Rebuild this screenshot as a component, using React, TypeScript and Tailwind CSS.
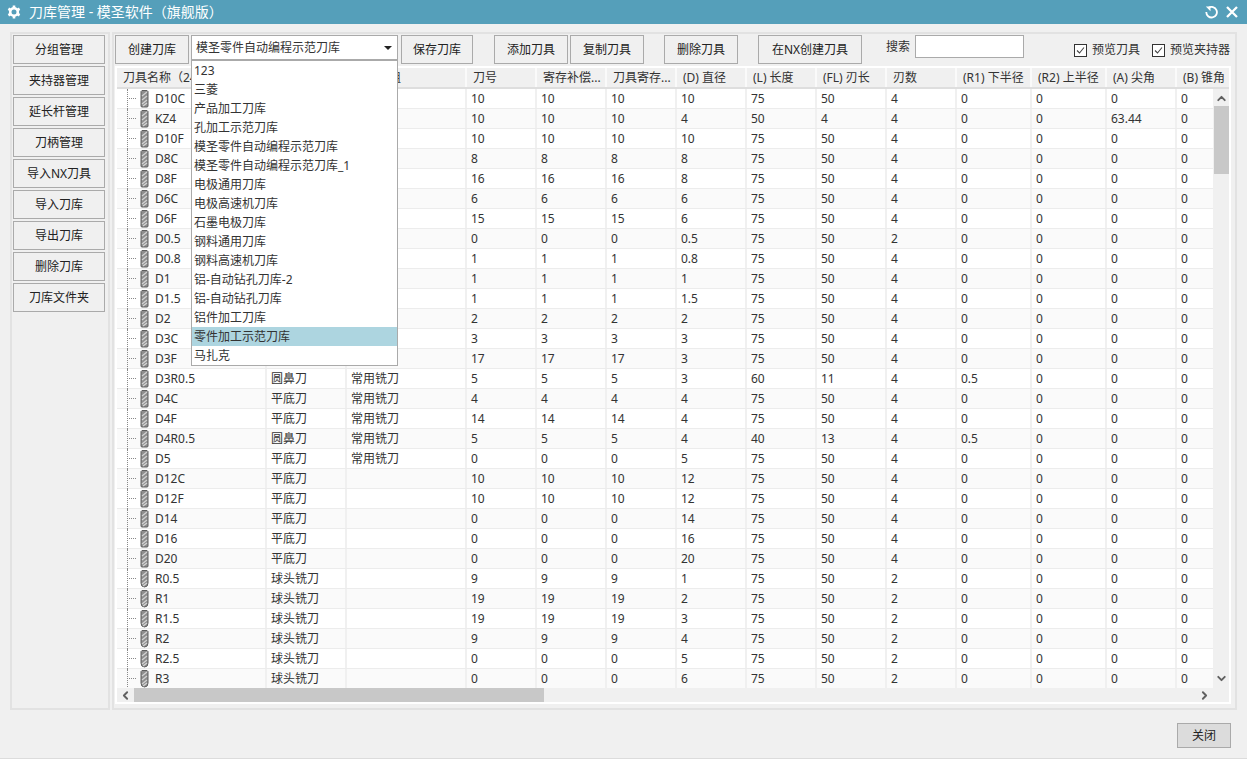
import { ChevronDown, ChevronLeft, ChevronRight, ChevronUp } from "lucide-react";

const SIDE_BUTTONS = ["分组管理", "夹持器管理", "延长杆管理", "刀柄管理", "导入NX刀具", "导入刀库", "导出刀库", "删除刀库", "刀库文件夹"];

const LIBRARIES = [
  "123",
  "三菱",
  "产品加工刀库",
  "孔加工示范刀库",
  "模圣零件自动编程示范刀库",
  "模圣零件自动编程示范刀库_1",
  "电极通用刀库",
  "电极高速机刀库",
  "石墨电极刀库",
  "钢料通用刀库",
  "钢料高速机刀库",
  "铝-自动钻孔刀库-2",
  "铝-自动钻孔刀库",
  "铝件加工刀库",
  "零件加工示范刀库",
  "马扎克",
];

const COLUMNS = [
  { title: "刀具名称（24）", width: "w-[150px]" },
  { title: "类型", width: "w-[80px]" },
  { title: "刀具分组", width: "w-[120px]" },
  { title: "刀号", width: "w-[70px]" },
  { title: "寄存补偿...", width: "w-[70px]" },
  { title: "刀具寄存...", width: "w-[70px]" },
  { title: "(D) 直径", width: "w-[70px]" },
  { title: "(L) 长度", width: "w-[70px]" },
  { title: "(FL) 刃长", width: "w-[70px]" },
  { title: "刃数", width: "w-[70px]" },
  { title: "(R1) 下半径", width: "w-[75px]" },
  { title: "(R2) 上半径", width: "w-[75px]" },
  { title: "(A) 尖角", width: "w-[70px]" },
  { title: "(B) 锥角", width: "w-[70px]" },
];

const FLAT = "平底刀";
const NOSE = "圆鼻刀";
const BALL = "球头铣刀";
const MILL = "常用铣刀";

// name, type, group, tool no, D, L, FL, flutes, R1, A
// type and group of the first rows sit behind the open list, so they stay empty
const TOOLS: [string, string, string, string, string, string, string, string, string, string][] = [
  ["D10C", "", "", "10", "10", "75", "50", "4", "0", "0"],
  ["KZ4", "", "", "10", "4", "50", "4", "4", "0", "63.44"],
  ["D10F", "", "", "10", "10", "75", "50", "4", "0", "0"],
  ["D8C", "", "", "8", "8", "75", "50", "4", "0", "0"],
  ["D8F", "", "", "16", "8", "75", "50", "4", "0", "0"],
  ["D6C", "", "", "6", "6", "75", "50", "4", "0", "0"],
  ["D6F", "", "", "15", "6", "75", "50", "4", "0", "0"],
  ["D0.5", "", "", "0", "0.5", "75", "50", "2", "0", "0"],
  ["D0.8", "", "", "1", "0.8", "75", "50", "4", "0", "0"],
  ["D1", "", "", "1", "1", "75", "50", "4", "0", "0"],
  ["D1.5", "", "", "1", "1.5", "75", "50", "4", "0", "0"],
  ["D2", "", "", "2", "2", "75", "50", "4", "0", "0"],
  ["D3C", "", "", "3", "3", "75", "50", "4", "0", "0"],
  ["D3F", "", "", "17", "3", "75", "50", "4", "0", "0"],
  ["D3R0.5", NOSE, MILL, "5", "3", "60", "11", "4", "0.5", "0"],
  ["D4C", FLAT, MILL, "4", "4", "75", "50", "4", "0", "0"],
  ["D4F", FLAT, MILL, "14", "4", "75", "50", "4", "0", "0"],
  ["D4R0.5", NOSE, MILL, "5", "4", "40", "13", "4", "0.5", "0"],
  ["D5", FLAT, MILL, "0", "5", "75", "50", "4", "0", "0"],
  ["D12C", FLAT, "", "10", "12", "75", "50", "4", "0", "0"],
  ["D12F", FLAT, "", "10", "12", "75", "50", "4", "0", "0"],
  ["D14", FLAT, "", "0", "14", "75", "50", "4", "0", "0"],
  ["D16", FLAT, "", "0", "16", "75", "50", "4", "0", "0"],
  ["D20", FLAT, "", "0", "20", "75", "50", "4", "0", "0"],
  ["R0.5", BALL, "", "9", "1", "75", "50", "2", "0", "0"],
  ["R1", BALL, "", "19", "2", "75", "50", "2", "0", "0"],
  ["R1.5", BALL, "", "19", "3", "75", "50", "2", "0", "0"],
  ["R2", BALL, "", "9", "4", "75", "50", "2", "0", "0"],
  ["R2.5", BALL, "", "0", "5", "75", "50", "2", "0", "0"],
  ["R3", BALL, "", "0", "6", "75", "50", "2", "0", "0"],
];

function GearIcon() {
  return (
    <svg width="14" height="14" viewBox="0 0 14 14" className="shrink-0">
      <circle cx="7" cy="7" r="3.800" fill="none" stroke="white" strokeWidth="2.600" />
      <path
        d="M7 .5v2.500M7 11v2.500M1.400 3.750l2.200 1.250M10.400 9l2.200 1.250M1.400 10.250l2.200-1.250M10.400 5l2.200-1.250"
        stroke="white"
        strokeWidth="2.600"
      />
    </svg>
  );
}

function ReloadIcon() {
  return (
    <svg width="13" height="13" viewBox="0 0 13 13" className="shrink-0">
      <path d="M3.500 1.900A5.300 5.300 0 1 1 1.300 6" fill="none" stroke="white" strokeWidth="1.800" />
      <path d="M.8 .5h4.700v4.700z" fill="white" />
    </svg>
  );
}

function CutterIcon({ ball }: { ball: boolean }) {
  return (
    <svg width="9" height="18" viewBox="0 0 9 18" className="shrink-0">
      <path
        d={ball ? "M2 .5h5l1 1v11.500q0 4-3.500 4T1 13V1.500z" : "M2 .5h5l1 1v15l-1 .5H2l-1-.5v-15z"}
        fill="#8e8e8e"
        stroke="#5e5e5e"
        strokeWidth="1"
      />
      <path d="M2 6l5-4M2 10l5-4M2 14l5-4M3 16l4-3" stroke="#d4d4d4" strokeWidth="1.200" fill="none" />
    </svg>
  );
}

function ToolButton({ label, width }: { label: string; width: string }) {
  return (
    <button className={`${width} h-[29px] shrink-0 border border-[#aaa] bg-[#f0f0f0] text-[#222]`}>{label}</button>
  );
}

function Check({ label }: { label: string }) {
  return (
    <div className="flex items-center gap-[5px]">
      <div className="flex h-[13px] w-[13px] items-center justify-center border border-[#333] bg-white">
        <svg width="11" height="11" viewBox="0 0 11 11">
          <path d="M2 5.500l2.500 2.500L9 2.500" stroke="#444" strokeWidth="1.100" fill="none" />
        </svg>
      </div>
      <span>{label}</span>
    </div>
  );
}

function Cell({ width, children }: { width: string; children?: React.ReactNode }) {
  return (
    <div className={`${width} flex h-full shrink-0 items-center border-r-2 border-[#f0f0f0] pl-1 whitespace-nowrap`}>
      {children}
    </div>
  );
}

function ToolRow({ tool, index }: { tool: (typeof TOOLS)[number]; index: number }) {
  const [name, type, group, no, d, l, fl, flutes, r1, a] = tool;
  const values = [no, no, no, d, l, fl, flutes, r1, "0", a, "0"];
  return (
    <div className={`flex h-5 border-b border-[#ececec] ${index % 2 ? "bg-[#fafafa]" : "bg-white"}`}>
      <div className="flex h-full w-[150px] shrink-0 items-center border-r-2 border-[#f0f0f0]">
        <div className="relative ml-[10px] h-full w-[13px] shrink-0">
          <div className="h-[22px] w-0 border-l border-dotted border-[#888]" />
          <div className="absolute top-[9px] left-0 w-[9px] border-t border-dotted border-[#888]" />
        </div>
        <CutterIcon ball={type === BALL} />
        <span className="ml-[6px]">{name}</span>
      </div>
      <Cell width="w-[80px]">{type}</Cell>
      <Cell width="w-[120px]">{group}</Cell>
      {values.map((value, i) => (
        <Cell key={i} width={COLUMNS[i + 3].width}>
          {value}
        </Cell>
      ))}
    </div>
  );
}

export default function App() {
  return (
    <div className="flex h-[759px] w-[1247px] flex-col overflow-hidden border-b border-[#dcdcdc] bg-[#f0f0f0] font-['Noto_Sans','Noto_Sans_CJK_SC',sans-serif] text-[12px] text-[#333]">
      {/* Title bar */}
      <div className="flex h-6 shrink-0 items-center bg-[#559fba] pr-[9px] pl-[7px] text-white">
        <GearIcon />
        <span className="ml-[8px] text-[14px] leading-none">刀库管理 - 模圣软件（旗舰版）</span>
        <div className="ml-auto">
          <ReloadIcon />
        </div>
        <svg width="12" height="12" viewBox="0 0 12 12" className="ml-[8px] shrink-0">
          <path d="M1 1l10 10M11 1L1 11" stroke="white" strokeWidth="2.300" />
        </svg>
      </div>

      <div className="flex h-[679px] shrink-0 gap-[2px] pt-2 pr-[10px] pl-[10px]">
        {/* Left buttons */}
        <div className="flex h-[678px] w-[100px] shrink-0 flex-col gap-[2px] border-2 border-[#e2e2e2] p-[1px]">
          {SIDE_BUTTONS.map((label) => (
            <ToolButton key={label} label={label} width="w-[92px]" />
          ))}
        </div>

        {/* Main panel */}
        <div className="relative flex h-[678px] w-[1125px] shrink-0 flex-col border-2 border-[#e2e2e2] pt-[1px] pl-[1px]">
          <div className="flex h-[31px] shrink-0 items-start">
            <ToolButton label="创建刀库" width="w-[74px]" />
            <div className="ml-[2px] flex h-[25px] w-[207px] shrink-0 items-center border border-[#aaa] bg-white pl-1">
              <span>模圣零件自动编程示范刀库</span>
              <div className="mr-[5px] ml-auto h-0 w-0 border-x-4 border-t-4 border-x-transparent border-t-[#222]" />
            </div>
            <div className="ml-[3px]">
              <ToolButton label="保存刀库" width="w-[72px]" />
            </div>
            <div className="ml-[21px]">
              <ToolButton label="添加刀具" width="w-[74px]" />
            </div>
            <div className="ml-[2px]">
              <ToolButton label="复制刀具" width="w-[74px]" />
            </div>
            <div className="ml-[20px]">
              <ToolButton label="删除刀具" width="w-[74px]" />
            </div>
            <div className="ml-[20px]">
              <ToolButton label="在NX创建刀具" width="w-[104px]" />
            </div>
            <span className="mt-[3px] ml-[24px]">搜索</span>
            <div className="ml-[5px] h-[23px] w-[109px] shrink-0 border border-[#aaa] bg-white" />
            <div className="mt-[6px] ml-[50px] flex gap-[12px] whitespace-nowrap">
              <Check label="预览刀具" />
              <Check label="预览夹持器" />
            </div>
          </div>

          {/* Tool table */}
          <div className="flex h-[638px] w-[1116px] shrink-0 flex-col overflow-hidden border-2 border-white">
            <div className="flex h-[21px] shrink-0 overflow-hidden border-b-2 border-[#dedede] bg-[#f0f0f0]">
              {COLUMNS.map((column) => (
                <div
                  key={column.title}
                  className={`${column.width} flex shrink-0 items-center border-r-2 border-[#fafafa] pl-[6px] whitespace-nowrap`}
                >
                  {column.title}
                </div>
              ))}
            </div>
            <div className="flex h-[599px] shrink-0">
              <div className="w-[1096px] shrink-0 overflow-hidden">
                <div className="w-[1200px]">
                  {TOOLS.map((tool, i) => (
                    <ToolRow key={tool[0]} tool={tool} index={i} />
                  ))}
                </div>
              </div>
              <div className="flex w-[17px] shrink-0 flex-col items-center bg-[#f0f0f0]">
                <ChevronUp className="mt-[3px] h-[13px] w-[13px] text-[#606060]" strokeWidth={3.500} />
                <div className="mt-[1px] h-[68px] w-[15px] bg-[#c8c8c8]" />
                <ChevronDown className="mt-auto mb-[3px] h-[13px] w-[13px] text-[#606060]" strokeWidth={3.500} />
              </div>
            </div>
            <div className="flex h-[15px] shrink-0 items-center bg-[#f0f0f0]">
              <ChevronLeft className="ml-[2px] h-[13px] w-[13px] text-[#606060]" strokeWidth={3.500} />
              <div className="ml-[2px] h-[15px] w-[410px] bg-[#c8c8c8]" />
              <ChevronRight className="ml-[654px] h-[13px] w-[13px] text-[#606060]" strokeWidth={3.500} />
            </div>
          </div>

          {/* Open library list */}
          <div className="absolute top-[26px] left-[77px] w-[207px] border border-[#aaa] bg-white">
            {LIBRARIES.map((library) => (
              <div
                key={library}
                className={`flex h-[19px] items-center pl-[2px] ${library === "零件加工示范刀库" ? "bg-[#add5e0]" : ""}`}
              >
                {library}
              </div>
            ))}
          </div>
        </div>
      </div>

      <div className="flex flex-1 items-start justify-end pt-[20px] pr-[16px]">
        <button className="h-[25px] w-[54px] shrink-0 border border-[#aaa] bg-[#dcdcdc] text-[#222]">关闭</button>
      </div>
    </div>
  );
}
